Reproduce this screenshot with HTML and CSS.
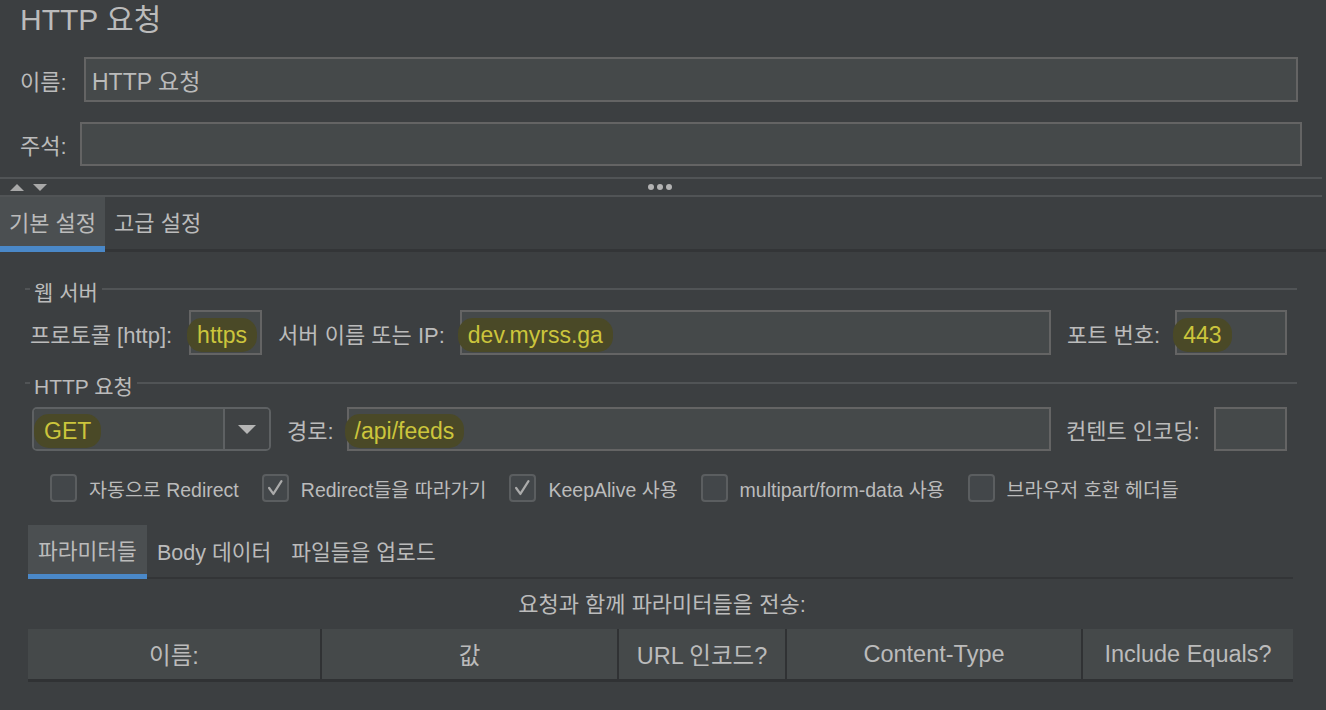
FILE: index.html
```html
<!DOCTYPE html>
<html lang="ko">
<head>
    <meta charset="UTF-8">
    <meta name="viewport" content="width=device-width, initial-scale=1.0">
    <title>HTTP 요청</title>
    <link rel="stylesheet" href="styles.css">
</head>
<body>
    <div class="panel">
        <h1 class="title">HTTP 요청</h1>

        <div class="field-row name-row">
            <label class="lbl">이름:</label>
            <div class="text-field">HTTP 요청</div>
        </div>
        <div class="field-row comment-row">
            <label class="lbl">주석:</label>
            <div class="text-field"></div>
        </div>

        <div class="splitter">
            <div class="split-arrows">
                <span class="tri-up"></span>
                <span class="tri-down"></span>
            </div>
            <div class="grip"><i></i><i></i><i></i></div>
        </div>

        <div class="tabs main-tabs">
            <div class="tab active">기본 설정</div>
            <div class="tab">고급 설정</div>
        </div>

        <div class="tab-body">
            <div class="group-title"><span>웹 서버</span></div>
            <div class="form-row server-row">
                <label class="lbl">프로토콜 [http]:</label>
                <div class="text-field proto-field"><span class="mark">https</span></div>
                <label class="lbl">서버 이름 또는 IP:</label>
                <div class="text-field grow"><span class="mark">dev.myrss.ga</span></div>
                <div class="right-group">
                    <label class="lbl">포트 번호:</label>
                    <div class="text-field grow"><span class="mark">443</span></div>
                </div>
            </div>

            <div class="group-title second"><span>HTTP 요청</span></div>
            <div class="form-row request-row">
                <div class="combo">
                    <div class="combo-value"><span class="mark">GET</span></div>
                    <div class="combo-button"><span class="tri-down big"></span></div>
                </div>
                <label class="lbl">경로:</label>
                <div class="text-field grow path-field"><span class="mark">/api/feeds</span></div>
                <div class="right-group">
                    <label class="lbl">컨텐트 인코딩:</label>
                    <div class="text-field grow"></div>
                </div>
            </div>

            <div class="checks">
                <div class="check-item"><span class="box"></span>자동으로 Redirect</div>
                <div class="check-item"><span class="box checked"><svg viewBox="0 0 27 27"><path d="M6 13.5 L11 20.5 L20.5 5.5"/></svg></span>Redirect들을 따라가기</div>
                <div class="check-item"><span class="box checked"><svg viewBox="0 0 27 27"><path d="M6 13.5 L11 20.5 L20.5 5.5"/></svg></span>KeepAlive 사용</div>
                <div class="check-item"><span class="box"></span>multipart/form-data 사용</div>
                <div class="check-item"><span class="box"></span>브라우저 호환 헤더들</div>
            </div>

            <div class="tabs sub-tabs">
                <div class="tab active">파라미터들</div>
                <div class="tab">Body 데이터</div>
                <div class="tab">파일들을 업로드</div>
            </div>

            <div class="send-caption">요청과 함께 파라미터들을 전송:</div>

            <div class="table-head">
                <div class="th">이름:</div>
                <div class="th">값</div>
                <div class="th">URL 인코드?</div>
                <div class="th">Content-Type</div>
                <div class="th">Include Equals?</div>
            </div>
        </div>
    </div>
</body>
</html>
```

FILE: styles.css
```css
html, body {
    margin: 0;
    padding: 0;
    height: 100%;
}
body {
    background-color: #3c3f41;
    color: #bbbbbb;
    font-family: "Liberation Sans", "Noto Sans CJK KR", sans-serif;
    font-size: 22px;
    overflow: hidden;
}
.panel {
    width: 1326px;
}
.title {
    margin: 0;
    padding-left: 20px;
    height: 40px;
    line-height: 40px;
    font-size: 30px;
    font-weight: normal;
}
.field-row {
    display: flex;
    align-items: center;
    padding-left: 20px;
}
.name-row {
    margin-top: 17px;
    padding-right: 28px;
}
.name-row .lbl {
    width: 64px;
}
.name-row .text-field {
    flex: 1;
    height: 45px;
}
.comment-row {
    margin-top: 20px;
    padding-right: 24px;
}
.comment-row .lbl {
    width: 60px;
}
.comment-row .text-field {
    flex: 1;
    height: 44px;
}
.lbl {
    white-space: nowrap;
    flex-shrink: 0;
}
.text-field {
    box-sizing: border-box;
    background-color: #45494a;
    border: 2px solid #646464;
    padding: 0 6px;
    display: flex;
    align-items: center;
    font-size: 23px;
    white-space: nowrap;
}
.grow {
    flex: 1;
    min-width: 0;
}

/* splitter between the header and the tabs */
.splitter {
    margin-top: 11px;
    width: 1322px;
    height: 16px;
    border-top: 2px solid #515456;
    border-bottom: 2px solid #515456;
    display: flex;
    align-items: center;
    position: relative;
}
.split-arrows {
    display: flex;
    gap: 9px;
    padding-left: 10px;
}
.tri-up {
    width: 0;
    height: 0;
    border-left: 7px solid transparent;
    border-right: 7px solid transparent;
    border-bottom: 7px solid #a8a8a8;
}
.tri-down {
    width: 0;
    height: 0;
    border-left: 7.5px solid transparent;
    border-right: 7.5px solid transparent;
    border-top: 7px solid #a8a8a8;
}
.tri-down.big {
    border-left-width: 9px;
    border-right-width: 9px;
    border-top-width: 9px;
    border-top-color: #b5b5b5;
}
.grip {
    position: absolute;
    left: 648px;
    top: 5px;
    display: flex;
    gap: 3px;
}
.grip i {
    width: 6px;
    height: 6px;
    border-radius: 50%;
    background: #b3b3b3;
}

/* tab strips */
.tabs {
    display: flex;
    border-bottom: 3px solid #333537;
}
.tab {
    padding: 0 10px;
    display: flex;
    align-items: center;
    white-space: nowrap;
}
.tab.active {
    background-color: #4b4f51;
    margin-bottom: -3px;
    box-shadow: inset 0 -6px 0 #4a88c8;
}
.main-tabs {
    height: 52px;
}
.main-tabs .tab {
    height: 52px;
    padding: 0 9px 4px;
    box-sizing: border-box;
}
.main-tabs .tab.active {
    height: 55px;
    padding-bottom: 7px;
}

.tab-body {
    padding: 0 29px 0 25px;
}
.group-title {
    display: flex;
    align-items: center;
    height: 24px;
    margin-top: 25px;
    font-size: 21px;
}
.group-title::before {
    content: "";
    width: 5px;
    height: 2px;
    background: #515456;
}
.group-title::after {
    content: "";
    flex: 1;
    height: 2px;
    background: #515456;
}
.group-title span {
    padding: 0 4px;
    margin-top: 4px;
}
.group-title.second {
    margin-top: 16px;
}

.form-row {
    display: flex;
    align-items: center;
    padding: 0 10px 0 5px;
}
.server-row {
    margin-top: 9px;
    height: 45px;
}
.server-row .text-field,
.request-row .text-field {
    height: 100%;
}
.request-row {
    margin-top: 12px;
    height: 44px;
}
.proto-field {
    width: 73px;
    margin: 0 16px 0 17px;
    overflow: visible;
}
.server-row .lbl + .grow {
    margin-left: 15px;
}
.right-group {
    width: 236px;
    height: 100%;
    display: flex;
    align-items: center;
    padding-left: 16px;
    box-sizing: border-box;
}
.right-group .text-field {
    margin-left: 14px;
}
.request-row .right-group {
    padding-left: 15px;
}

.mark {
    color: #ccc53c;
    background-color: #4a4927;
    border-radius: 15px;
    padding: 4px 10px 3px;
    margin: 0 -10px;
    position: relative;
    top: 2px;
}
.path-field {
    margin-left: 13px;
}

.combo {
    box-sizing: border-box;
    width: 239px;
    height: 100%;
    margin-left: 2px;
    margin-right: 16px;
    display: flex;
    border: 2px solid #5e6163;
    border-radius: 5px;
    overflow: hidden;
    font-size: 23px;
}
.combo-value {
    flex: 1;
    background-color: #45494a;
    display: flex;
    align-items: center;
    padding-left: 10px;
    border-right: 2px solid #5e6163;
}
.combo-button {
    width: 44px;
    display: flex;
    align-items: center;
    justify-content: center;
    background-color: #3f4244;
}

.checks {
    display: flex;
    align-items: center;
    height: 28px;
    margin-top: 23px;
    padding-left: 25px;
    gap: 23px;
    font-size: 19.5px;
}
.check-item {
    display: flex;
    align-items: center;
    gap: 12px;
    white-space: nowrap;
}
.box {
    box-sizing: border-box;
    width: 27px;
    height: 28px;
    border: 2px solid #5b5e60;
    border-radius: 4px;
    background-color: #43474a;
    display: flex;
}
.box svg {
    width: 23px;
    height: 24px;
}
.box svg path {
    fill: none;
    stroke: #ababab;
    stroke-width: 2.6;
    stroke-linecap: round;
    stroke-linejoin: round;
}

.sub-tabs {
    margin: 23px 4px 0 3px;
    height: 52px;
    border-bottom-width: 2px;
    font-size: 21.5px;
}
.sub-tabs .tab {
    height: 52px;
    box-sizing: border-box;
    padding: 0 10px 2px;
}
.sub-tabs .tab.active {
    height: 54px;
    margin-bottom: -2px;
    box-shadow: inset 0 -5px 0 #4a88c8;
    padding-bottom: 6px;
}

.send-caption {
    text-align: center;
    margin-top: 14px;
    height: 24px;
    line-height: 24px;
    padding-left: 2px;
}

.table-head {
    display: grid;
    grid-template-columns: 294px 297px 168px 296px 1fr;
    margin: 12px 4px 0 3px;
    height: 50px;
    background-color: #45494a;
    border-bottom: 3px solid #303234;
    font-size: 23.5px;
}
.th {
    display: flex;
    align-items: center;
    justify-content: center;
    border-right: 2px solid #303234;
    white-space: nowrap;
}
.th:last-child {
    border-right: none;
}
```
